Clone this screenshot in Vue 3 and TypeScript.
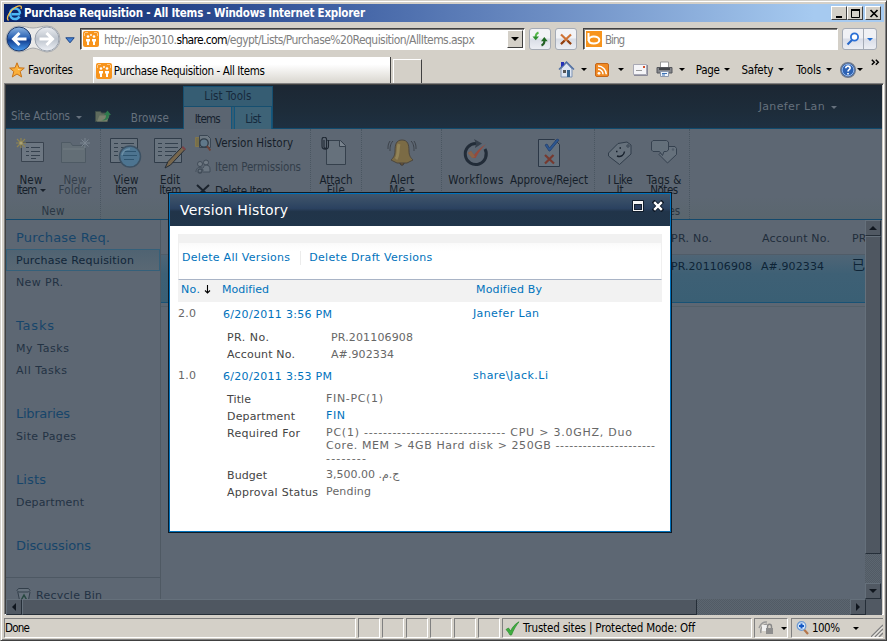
<script setup lang="ts">
interface SideRow {
  label: string
  width: number
  active?: boolean
}
interface SideGroup {
  title: string
  width: number
  rows: SideRow[]
}
interface Field {
  name: string
  nameWidth: number
  lines: { text: string; width: number }[]
  link?: boolean
}

// Spreads a label's letters so that it fills its designed width.
const vFit = {
  mounted(el: HTMLElement, binding: { value: number }) {
    const count = Array.from((el.textContent ?? '').trim()).length
    const natural = el.getBoundingClientRect().width
    if (count > 1) el.style.letterSpacing = `${((binding.value - natural) / (count - 1)).toFixed(3)}px`
  },
}

const sideGroups: SideGroup[] = [
  {
    title: 'Purchase Req.',
    width: 94,
    rows: [
      { label: 'Purchase Requisition', width: 118, active: true },
      { label: 'New PR.', width: 47 },
    ],
  },
  {
    title: 'Tasks',
    width: 38,
    rows: [
      { label: 'My Tasks', width: 53 },
      { label: 'All Tasks', width: 51 },
    ],
  },
  { title: 'Libraries', width: 54, rows: [{ label: 'Site Pages', width: 60 }] },
  { title: 'Lists', width: 30, rows: [{ label: 'Department', width: 68 }] },
  { title: 'Discussions', width: 75, rows: [] },
]

const firstFields: Field[] = [
  { name: 'PR. No.', nameWidth: 42, lines: [{ text: 'PR.201106908', width: 82 }] },
  { name: 'Account No.', nameWidth: 68, lines: [{ text: 'A#.902334', width: 63 }] },
]

const secondFields: Field[] = [
  { name: 'Title', nameWidth: 24, lines: [{ text: 'FIN-PC(1)', width: 57 }] },
  { name: 'Department', nameWidth: 68, lines: [{ text: 'FIN', width: 19 }], link: true },
  {
    name: 'Required For',
    nameWidth: 73,
    lines: [
      { text: 'PC(1) ------------------------------ CPU > 3.0GHZ, Duo', width: 306 },
      { text: 'Core. MEM > 4GB Hard disk > 250GB ----------------------', width: 329 },
      { text: '--------', width: 40 },
    ],
  },
  { name: 'Budget', nameWidth: 40, lines: [{ text: '3,500.00 ج.م.\u200f', width: 72 }] },
  { name: 'Approval Status', nameWidth: 91, lines: [{ text: 'Pending', width: 45 }] },
]
</script>

<template>
  <div class="window">
    <header class="titlebar">
      <svg class="ie" width="17" height="17" viewBox="0 0 17 17">
        <path d="M14.2 9.2H5.6M14 8.8C14 5.6 11.800 3.500 9 3.500S4 5.800 4 8.800s2.200 5.200 5 5.200c2 0 3.600-1 4.500-2.500" fill="none" stroke="#4cb8f5" stroke-width="2.500" />
        <path d="M2.500 15.500C-1 12.500 6 3 12 1.200c3-.900 4 .3 3 2.800" fill="none" stroke="#f5c04a" stroke-width="1.300" />
      </svg>
      <span v-fit="341" class="title-text">Purchase Requisition - All Items - Windows Internet Explorer</span>
      <span class="spacer"></span>
      <div class="winbtns">
        <span class="winbtn"><svg width="14" height="12" viewBox="0 0 14 12"><path d="M3 8h6v2H3z" fill="#000" /></svg></span>
        <span class="winbtn"><svg width="14" height="12" viewBox="0 0 14 12"><path d="M2.500 2v7.500h8V2M2 2h9" fill="none" stroke="#000" /><path d="M2 1h9v2H2z" fill="#000" /></svg></span>
        <span class="winbtn last"><svg width="14" height="12" viewBox="0 0 14 12"><path d="M3.500 2l7 7M10.500 2l-7 7" stroke="#000" stroke-width="1.700" /></svg></span>
      </div>
    </header>

    <div class="navrow">
      <svg class="backfwd" width="58" height="30" viewBox="0 0 58 30">
        <defs>
          <linearGradient id="back" x1="0" y1="0" x2="0" y2="1"><stop offset="0" stop-color="#8db4e0" /><stop offset=".45" stop-color="#2a62b4" /><stop offset=".55" stop-color="#123f91" /><stop offset="1" stop-color="#4a9df0" /></linearGradient>
          <linearGradient id="fwd" x1="0" y1="0" x2="0" y2="1"><stop offset="0" stop-color="#eceef2" /><stop offset=".5" stop-color="#bcc3cc" /><stop offset="1" stop-color="#eef1f6" /></linearGradient>
        </defs>
        <path d="M14 2c6 0 9 2 14 2s9-2 14-2a13 13 0 0 1 0 26c-5 0-9-4-14-4s-8 4-14 4A13 13 0 0 1 14 2z" fill="#e9e9e8" stroke="#a7a9ac" />
        <circle cx="14" cy="15" r="12" fill="url(#back)" stroke="#1e3a6b" />
        <circle cx="42" cy="15" r="12" fill="url(#fwd)" stroke="#9aa2ad" />
        <path d="M14.500 9L8.500 15l6 6M9 15h12.500" fill="none" stroke="#fff" stroke-width="3" />
        <path d="M41.500 9l6 6-6 6M47 15H34.500" fill="none" stroke="#fff" stroke-width="3" />
      </svg>
      <svg class="histcaret" width="10" height="7" viewBox="0 0 10 7"><path d="M.8.8h8.400L5 5.800z" fill="#4583d6" stroke="#1c4384" /></svg>
      <div class="address">
        <svg class="site" width="16" height="16" viewBox="0 0 16 16"><rect width="16" height="16" rx="2" fill="#f7941d" /><path d="M2 1.500h3M11 1.500h3M1.500 2v3M14.500 2v3" stroke="#fbc88a" /><circle cx="5" cy="5.500" r="1.300" fill="#fff" /><circle cx="11" cy="5.500" r="1.300" fill="#fff" /><path d="M3 8h4v2.500H6V14H4v-3.500H3zM9 8h4v2.500h-1V14h-2v-3.500H9zM7.300 3h1.400v2H7.300z" fill="#fff" /></svg>
        <div class="url"><span v-fit="73">http://eip3010.</span><b v-fit="51">share.com</b><span v-fit="248">/egypt/Lists/Purchase%20Requisition/AllItems.aspx</span></div>
        <span class="drop"><i class="caret big"></i></span>
      </div>
      <span class="navbtn refresh">
        <svg width="16" height="16" viewBox="0 0 16 16"><path d="M6.500 1.500C4 2.500 3.500 4 3.500 7" fill="none" stroke="#55b848" stroke-width="2" /><path d="M.5 5.500h6.500L3.700 9.300z" fill="#2f8f2f" /><path d="M9.500 14.500c2.500-1 3-2.500 3-5" fill="none" stroke="#245f24" stroke-width="2" /><path d="M9 10.200h6.700L12.300 6z" fill="#1f6a22" /></svg>
      </span>
      <span class="navbtn stop">
        <svg width="14" height="14" viewBox="0 0 14 14"><path d="M2 2.500l10 9.500M12 2.500L2 12" stroke="#cf7437" stroke-width="2.200" /><path d="M2 12l3.500-3.300M8.500 8.700L12 12" stroke="#8d3f12" stroke-width="2" /></svg>
      </span>
      <div class="search">
        <svg class="site" width="16" height="16" viewBox="0 0 16 16"><rect width="16" height="16" fill="#f7941d" /><path d="M2.500 2v8M2.800 9c0-2 2.200-3.500 5-3.500s5.500 1.400 5.500 3.500-2.500 3.500-5.500 3.500-5-1.500-5-3.500z" fill="none" stroke="#fff" stroke-width="2" /></svg>
        <span v-fit="20">Bing</span>
      </div>
      <div class="searchbtn">
        <span class="lens"><svg width="14" height="14" viewBox="0 0 14 14"><path d="M1.500 12.500l5-5" stroke="#2868c8" stroke-width="2.200" /><circle cx="8.500" cy="5" r="3.600" fill="#fff" stroke="#2a6fd6" stroke-width="1.800" /></svg></span>
        <span class="more"><i class="caret blue"></i></span>
      </div>
    </div>

    <div class="cmdrow">
      <svg class="star" width="16" height="16" viewBox="0 0 16 16"><path d="M8 .8l2 5 5.300.3-4.100 3.400 1.500 5.500L8 12l-4.700 3 1.500-5.500L.7 6.100 6 5.800z" fill="#fbb03b" stroke="#c8741a" /><path d="M8 3l1 4 3.500.3L9 8z" fill="#fde6a8" /></svg>
      <span v-fit="45" class="fav">Favorites</span>
      <div class="tab">
        <svg class="site" width="16" height="16" viewBox="0 0 16 16"><rect width="16" height="16" rx="2" fill="#f7941d" /><path d="M2 1.500h3M11 1.500h3M1.500 2v3M14.500 2v3" stroke="#fbc88a" /><circle cx="5" cy="5.500" r="1.300" fill="#fff" /><circle cx="11" cy="5.500" r="1.300" fill="#fff" /><path d="M3 8h4v2.500H6V14H4v-3.500H3zM9 8h4v2.500h-1V14h-2v-3.500H9zM7.300 3h1.400v2H7.300z" fill="#fff" /></svg>
        <span v-fit="151" class="tabtext">Purchase Requisition - All Items</span>
      </div>
      <div class="newtab"></div>
      <div class="commands">
        <svg width="17" height="17" viewBox="0 0 17 17"><path d="M3 8l5.500-6L14 8v8H3z" fill="#dfe6f2" stroke="#7d93b5" /><path d="M1 8.500l7.500-7.500L16 8.500" fill="none" stroke="#4d6da3" stroke-width="1.400" /><path d="M3 1h3v3L3 6z" fill="#2532b8" /><path d="M9 9h3v7H9z" fill="#35648f" /><path d="M5 9h3v3H5z" fill="#555" /></svg>
        <i class="caret c1"></i>
        <svg class="rss" width="14" height="14" viewBox="0 0 14 14"><rect x=".5" y=".5" width="13" height="13" rx="1.500" fill="#f08a24" stroke="#c4661a" /><circle cx="4" cy="10.300" r="1.400" fill="#fff" /><path d="M3 6.300a5 5 0 0 1 5 5M3 3a8.300 8.300 0 0 1 8.300 8.300" fill="none" stroke="#fff" stroke-width="1.500" /></svg>
        <i class="caret c2"></i>
        <svg class="mail" width="15" height="12" viewBox="0 0 15 12"><path d="M.5.5h13v10H.5z" fill="#f5f5f8" stroke="#a9a9b5" /><path d="M14.500 1v10.500H1" fill="none" stroke="#8a8a98" /><path d="M10 2h2v2h-2z" fill="#d3502c" /><path d="M3 6.500h6" stroke="#999" /></svg>
        <svg class="print" width="17" height="17" viewBox="0 0 17 17"><path d="M4.500 1h8v6h-8z" fill="#fff" stroke="#999" /><path d="M1 6.500h15V12H1z" fill="#85878c" stroke="#55575c" /><path d="M3 7h11v2H3z" fill="#44464a" /><path d="M4.500 10.500h8v5h-8z" fill="#eef4fb" stroke="#8d99ad" /><path d="M6 12.500h5M6 14h3" stroke="#3c73b5" /></svg>
        <i class="caret c3"></i>
        <span v-fit="24" class="cmd">Page</span><i class="caret"></i>
        <span v-fit="32" class="cmd safety">Safety</span><i class="caret"></i>
        <span v-fit="25" class="cmd tools">Tools</span><i class="caret"></i>
        <svg class="help" width="16" height="16" viewBox="0 0 16 16"><circle cx="8" cy="8" r="7.300" fill="#2d62b3" stroke="#6f7a8c" stroke-width="1.400" /><circle cx="8" cy="8" r="5.800" fill="none" stroke="#8fb4ea" /><path d="M5.800 6.300c0-3 4.600-2.600 4.300-.1C10 7.800 8 7.600 8 9.600M8 11v1.600" fill="none" stroke="#fff" stroke-width="1.700" /></svg>
        <i class="caret c4"></i>
        <svg class="chev" width="9" height="7" viewBox="0 0 9 7"><path d="M.8.700L3.300 3.200.8 5.700M4.800.700l2.500 2.500-2.500 2.500" fill="none" stroke="#000" stroke-width="1.500" /></svg>
      </div>
    </div>

    <div class="frame">
      <div class="sp-top">
        <span v-fit="59" class="siteactions">Site Actions</span><i class="caret dim"></i>
        <svg class="upfolder" width="16" height="14" viewBox="0 0 16 14"><path d="M.5 2.500h5l1 1.500h6v8.500H.5z" fill="#5f6b5d" stroke="#3f4d48" /><path d="M2 12.500l2.500-6h10L12 12.500z" fill="#78806c" /><path d="M6 11c4 0 5-2 5-5H9l3.500-4.500L16 6h-2c0 4-3 6.500-8 5z" fill="#2f7a4d" /></svg>
        <span v-fit="38" class="browse">Browse</span>
        <div class="tooltabs">
          <div class="tt-title"><span v-fit="47">List Tools</span></div>
          <div class="tt-row">
            <span class="tt on"><span v-fit="26">Items</span></span>
            <span class="tt"><span v-fit="16">List</span></span>
          </div>
        </div>
        <span class="spacer"></span>
        <div class="user"><span v-fit="66">Janefer Lan</span><i class="caret dim"></i></div>
      </div>

      <div class="ribbon">
        <div class="rgroup g1">
          <div class="rbody">
            <div class="rbtn">
              <svg width="32" height="32" viewBox="0 0 32 32"><path d="M6.500 5.500h22v19h-22z" fill="#6d7782" stroke="#39434f" /><path d="M11 10.500h3M11 14.500h3M11 18.500h3M16 10.500h9M16 14.500h9M16 18.500h9M16 21.500h5" stroke="#35414e" /><path d="M6 1v10M1 6h10M2 2l8 8M10 2l-8 8" stroke="#8f8450" stroke-width="1.200" /><circle cx="6" cy="6" r="1.600" fill="#aaa273" /></svg>
              <span v-fit="23">New</span><span class="ln2"><span v-fit="21">Item</span><i class="caret tiny"></i></span>
            </div>
            <div class="rbtn off">
              <svg width="32" height="32" viewBox="0 0 32 32"><path d="M2.500 25.500v-20h9l2 3h13v17z" fill="#636e76" stroke="#4e5a64" /><path d="M4 12h21" stroke="#727c82" /><path d="M26 1v10M21 6h10M22.500 2.500l7 7M29.500 2.500l-7 7" stroke="#7b8691" /></svg>
              <span v-fit="23">New</span><span v-fit="33" class="ln2">Folder</span>
            </div>
          </div>
          <div class="rlabel"><span v-fit="23">New</span></div>
        </div>
        <div class="rgroup g2">
          <div class="rbody">
            <div class="rbtn">
              <svg width="32" height="32" viewBox="0 0 32 32"><path d="M.5 1.500h27v24H.5z" fill="#68737e" stroke="#303c49" /><path d="M4 6.500h4M4 10.500h4M4 14.500h4M4 18.500h4M11 6.500h13M11 10.500h13" stroke="#33404d" /><circle cx="20" cy="19.500" r="10.500" fill="#4d7490" stroke="#3c5163" stroke-width="1.500" /><path d="M14 14.500h12M13 18.500h14M14 22.500h10" stroke="#2e546f" /><path d="M12 18a8 8 0 0 1 8-6" fill="none" stroke="#6d90a6" stroke-width="1.500" /></svg>
              <span v-fit="25">View</span><span v-fit="22" class="ln2">Item</span>
            </div>
            <div class="rbtn">
              <svg width="32" height="32" viewBox="0 0 32 32"><path d="M.5 1.500h27v24H.5z" fill="#68737e" stroke="#303c49" /><path d="M4 6.500h4M4 10.500h4M4 14.500h4M4 18.500h4M11 6.500h13M11 10.500h13M11 14.500h11M11 18.500h7" stroke="#33404d" /><path d="M11 31l3-6.500L28 10l3 2.500L16.500 28z" fill="#77664c" stroke="#252d36" /><path d="M27.500 10.500l1.500-1.500 3 3-1.500 1.500z" fill="#7b4247" /></svg>
              <span v-fit="20">Edit</span><span v-fit="22" class="ln2">Item</span>
            </div>
            <div class="rsmall">
              <div class="rs">
                <svg width="16" height="16" viewBox="0 0 16 16"><path d="M.5 2.500h4v9h-4z" fill="#776f4a" stroke="#82764c" /><path d="M4.500.5h8l3 3v9h-11z" fill="#6d7882" stroke="#3a4653" /><circle cx="9" cy="8" r="4.200" fill="#60788a" stroke="#2f3b47" stroke-width="1.300" /><path d="M12 11l3.500 4.500" stroke="#6c4238" stroke-width="2" /></svg>
                <span v-fit="78">Version History</span>
              </div>
              <div class="rs off">
                <svg width="16" height="16" viewBox="0 0 16 16"><circle cx="5" cy="5" r="2.500" fill="#707a84" stroke="#414c58" /><circle cx="11" cy="3.500" r="2.500" fill="#707a84" stroke="#414c58" /><path d="M1 13c0-6 7-6 7-1M8 9c1-4 7-4 7 1v3H8" fill="#6a7580" stroke="#414c58" /><circle cx="5" cy="12" r="2" fill="none" stroke="#414c58" stroke-width="1.300" /></svg>
                <span v-fit="86">Item Permissions</span>
              </div>
              <div class="rs">
                <svg width="16" height="16" viewBox="0 0 16 16"><path d="M2 2l12 11M14 2L2 13" stroke="#1a222c" stroke-width="2" /></svg>
                <span v-fit="57">Delete Item</span>
              </div>
            </div>
          </div>
          <div class="rlabel"></div>
        </div>
        <div class="rgroup g3">
          <div class="rbody">
            <div class="rbtn">
              <svg width="32" height="32" viewBox="0 0 32 32"><path d="M6.500 3.500h14l5 5v19h-19z" fill="#66717c" stroke="#35404c" /><path d="M19.500 3.500v6h6" fill="#7a848e" stroke="#35404c" /><path d="M4 3v7a1.300 1.300 0 0 0 2.600 0V2.500a2.200 2.200 0 0 0-4.600 0V9a3.200 3.200 0 0 0 6.500 0V3" fill="none" stroke="#1f2833" stroke-width="1.100" /></svg>
              <span v-fit="33">Attach</span><span v-fit="18" class="ln2">File</span>
            </div>
          </div>
          <div class="rlabel"></div>
        </div>
        <div class="rgroup g4">
          <div class="rbody">
            <div class="rbtn">
              <svg width="32" height="32" viewBox="0 0 32 32"><path d="M16 3c-6 0-7 5-7 11 0 5-2 7-4 9l6 3h10l6-3c-2-2-4-4-4-9 0-6-1-11-7-11z" fill="#7b6b45" stroke="#4c473f" /><path d="M13 7c-1.500 5 0 11-3 15" fill="none" stroke="#938458" stroke-width="3" /><path d="M14 26c0 3 4 3 4 0" fill="#5f4e37" stroke="#403d3a" /><path d="M7 4c-3 3-3 7-3 10M4 4c-2 3-2 5-2 8M25 4c3 3 3 7 3 10M28 4c2 3 2 5 2 8" fill="none" stroke="#3c424a" /></svg>
              <span v-fit="24">Alert</span><span class="ln2"><span v-fit="16">Me</span><i class="caret tiny"></i></span>
            </div>
          </div>
          <div class="rlabel"></div>
        </div>
        <div class="rgroup g5">
          <div class="rbody">
            <div class="rbtn w68">
              <svg width="32" height="32" viewBox="0 0 32 32"><path d="M16 6.500A10.500 10.500 0 1 0 25 12" fill="none" stroke="#222c38" stroke-width="3" /><path d="M14 2l8 4.500-7 4.500 1-4.500z" fill="#353f4b" /><path d="M8 16l3-2 3 4c3-4 6-7 12-11-4 4-7 8-10.500 14h-3z" fill="#954a3c" /><path d="M8 16l3-2 3 4 1 2-3 1z" fill="#896348" /></svg>
              <span v-fit="55">Workflows</span>
            </div>
            <div class="rbtn w78">
              <svg width="32" height="32" viewBox="0 0 32 32"><path d="M5.500 2.500h16l5 5v22h-21z" fill="#65717d" stroke="#2b3746" /><path d="M12 8l2-1 2.500 4L24 2l2 1-9 11h-1z" fill="#2c5792" stroke="#294673" /><path d="M12 18l9 8.500M20.500 18L12 26.500" stroke="#76392f" stroke-width="2.200" /></svg>
              <span v-fit="78">Approve/Reject</span>
            </div>
          </div>
          <div class="rlabel"></div>
        </div>
        <div class="rgroup g6">
          <div class="rbody">
            <div class="rbtn w50">
              <svg width="32" height="32" viewBox="0 0 32 32"><path d="M14 6.500l9-1.500 4 3v9L15.500 27.500 4.500 19v-3z" fill="#66717c" stroke="#303c4a" stroke-linejoin="round" /><circle cx="24" cy="9" r="1.300" fill="#586470" stroke="#303c4a" stroke-width=".7" /><path d="M12 14.500h1.500M15.500 11h1.500M13 19c4 1.500 7-1 7.500-4.500" fill="none" stroke="#17202c" stroke-width="1.400" /></svg>
              <span v-fit="25">I Like</span><span v-fit="7" class="ln2">It</span>
            </div>
            <div class="rbtn w38">
              <svg width="32" height="32" viewBox="0 0 32 32"><path d="M27 9.500h-8l-8 8L19.500 26l9-8.500v-6z" fill="#66717c" stroke="#35414f" /><circle cx="25" cy="12.500" r="1.200" fill="#4f5b68" /><path d="M5 3.500h13.500l2 1.500v8l-2 1.500H16l-1.500 4-3-4H5L3.500 13V5z" fill="#64707b" stroke="#35414f" /></svg>
              <span v-fit="35">Tags &amp;</span><span v-fit="28" class="ln2">Notes</span>
            </div>
          </div>
          <div class="rlabel"><span v-fit="76">Tags and Notes</span></div>
        </div>
      </div>

      <div class="workspace">
        <div class="content">
          <nav class="side">
            <section v-for="g in sideGroups" :key="g.title" class="sgroup">
              <h3><span v-fit="g.width">{{ g.title }}</span></h3>
              <div v-for="r in g.rows" :key="r.label" class="srow" :class="{ active: r.active }"><span v-fit="r.width">{{ r.label }}</span></div>
            </section>
            <div class="recycle">
              <svg width="16" height="16" viewBox="0 0 16 16"><path d="M2.500 1.500h10l1.500 2-1.500 1.500h-10L1 3.500zM1.800 5L4 15.500h8L14 5" fill="#67727d" stroke="#323e4a" /><path d="M5 13.500L8 8l3 5.500z" fill="none" stroke="#274740" stroke-width="1.500" /></svg>
              <span v-fit="66">Recycle Bin</span>
            </div>
          </nav>
          <main class="list">
            <div class="lhead"><span class="k1"><span v-fit="41">PR. No.</span></span><span class="k2"><span v-fit="68">Account No.</span></span><span class="k3">PR</span></div>
            <div class="lrow"><span class="k1"><span v-fit="81">PR.201106908</span></span><span class="k2"><span v-fit="63">A#.902334</span></span><span class="k3 cjk">已批</span></div>
            <div class="lend"></div>
          </main>
        </div>
        <div class="vscroll">
          <span class="sb"><i class="ar up"></i></span>
          <span class="thumb v"></span>
          <span class="track"></span>
          <span class="sb"><i class="ar down"></i></span>
        </div>
      </div>
      <div class="hscroll">
        <span class="sb"><i class="ar left"></i></span>
        <span class="thumb h"></span>
        <span class="track"></span>
        <span class="sb"><i class="ar right"></i></span>
        <span class="corner"></span>
      </div>
    </div>

    <footer class="status">
      <span class="cell done"><span v-fit="25">Done</span></span>
      <span v-for="n in 6" :key="n" class="cell small"></span>
      <span class="cell zone">
        <svg width="15" height="15" viewBox="0 0 15 15"><path d="M1 8.500l2.500-1.500 2 3C7.500 6 10 3 14 .8 11 4.500 8.500 9 6.500 14H5C4 12 2.500 10 1 8.500z" fill="#3fae3f" stroke="#2b8a2e" stroke-width=".7" /></svg>
        <span v-fit="172">Trusted sites | Protected Mode: Off</span>
      </span>
      <span class="cell lock">
        <svg width="16" height="14" viewBox="0 0 16 14"><path d="M1 7C3 2 6 .5 9 1M3 12c-1-4 1-8 6-9" fill="none" stroke="#999" stroke-width="1.500" /><path d="M4 4h5v6H4z" fill="#f1f1f1" /><path d="M9.500 7V5.500c0-3 4-3 4 0V7" fill="none" stroke="#888" stroke-width="1.400" /><path d="M8 7h7v6H8z" fill="#8e8e8e" /></svg>
        <i class="caret"></i>
      </span>
      <span class="cell zoom">
        <svg width="13" height="14" viewBox="0 0 13 14"><path d="M8 8.500l4 4.500" stroke="#b5764a" stroke-width="2.200" /><circle cx="5.500" cy="5" r="4.300" fill="#cfe3fa" stroke="#6f9bd1" stroke-width="1.200" /><path d="M5.500 2.500v5M3 5h5" stroke="#1559c4" stroke-width="2" /></svg>
        <span v-fit="28">100%</span>
        <i class="caret"></i>
      </span>
      <svg class="grip" width="12" height="13" viewBox="0 0 12 13"><path d="M0 13L12 1M4 13l8-8M8 13l4-4" stroke="#808080" stroke-width="1.400" /><path d="M1.500 13L12 2.500M5.500 13L12 6.500" stroke="#fff" stroke-width=".8" /></svg>
    </footer>

    <div class="dialog">
      <div class="dhead">
        <span v-fit="108">Version History</span>
        <svg class="dmax" width="12" height="12" viewBox="0 0 12 12"><rect width="12" height="12" rx="1" fill="#101c2b" /><path d="M1 1h10v10H1z" fill="#f4f4f4" /><path d="M2 4h8v6H2z" fill="#14202f" /><path d="M3 5h6v4H3z" fill="#2a3c5c" /></svg>
        <svg class="dclose" width="12" height="12" viewBox="0 0 12 12"><path d="M2.500 2.500l7 7M9.500 2.500l-7 7" stroke="#0d1725" stroke-width="4" stroke-linecap="square" /><path d="M2.200 2.200l7.600 7.600M9.800 2.200l-7.600 7.600" stroke="#fff" stroke-width="2.400" /></svg>
      </div>
      <div class="dbody">
        <div class="dtools"><a v-fit="108">Delete All Versions</a><i class="dsep"></i><a v-fit="123">Delete Draft Versions</a></div>
        <div class="dcols">
          <span class="dno"><a v-fit="19">No.</a><svg width="7" height="9" viewBox="0 0 7 9"><path d="M3.500 0v8M1 5.500l2.500 2.500L6 5.500" fill="none" stroke="#000" stroke-width="1.100" /></svg></span>
          <span class="dmod"><a v-fit="47">Modified</a></span>
          <span><a v-fit="66">Modified By</a></span>
        </div>
        <div class="ver">
          <span class="num"><span v-fit="18">2.0</span></span>
          <span class="date"><a v-fit="109">6/20/2011 3:56 PM</a></span>
          <span><a v-fit="66">Janefer Lan</a></span>
        </div>
        <div class="fields first">
          <div v-for="f in firstFields" :key="f.name" class="field">
            <span class="fname"><span v-fit="f.nameWidth">{{ f.name }}</span></span>
            <div class="fval"><div v-for="l in f.lines" :key="l.text"><span v-fit="l.width">{{ l.text }}</span></div></div>
          </div>
        </div>
        <div class="ver second">
          <span class="num"><span v-fit="18">1.0</span></span>
          <span class="date"><a v-fit="109">6/20/2011 3:53 PM</a></span>
          <span><a v-fit="75">share\Jack.Li</a></span>
        </div>
        <div class="fields rest">
          <div v-for="f in secondFields" :key="f.name" class="field">
            <span class="fname"><span v-fit="f.nameWidth">{{ f.name }}</span></span>
            <div class="fval" :class="{ link: f.link }"><div v-for="l in f.lines" :key="l.text"><span v-fit="l.width">{{ l.text }}</span></div></div>
          </div>
        </div>
      </div>
    </div>
  </div>
</template>

<style>
body {
  overflow: hidden;
  background: #d4d0c8;
}
</style>

<style scoped>
.window, .window * { box-sizing: border-box; }
.window {
  position: relative;
  width: 887px;
  height: 641px;
  display: flex;
  flex-direction: column;
  padding: 2px;
  background: #d4d0c8;
  border: 1px solid #d4d0c8;
  border-right-color: #404040;
  border-bottom-color: #404040;
  box-shadow: inset 1px 1px #fff, inset -1px -1px #808080;
  font: 11.5px "DejaVu Sans Condensed", "DejaVu Sans", sans-serif;
  font-stretch: condensed;
  color: #000;
  white-space: nowrap;
}
svg { flex: none; display: block; }
span { flex: none; }
.spacer { flex: 1; }
.caret {
  flex: none;
  width: 0;
  height: 0;
  border: 3px solid transparent;
  border-top-color: #000;
  border-bottom: 0;
}
.caret.big { border-width: 4px 4px 0; }
.caret.blue { border-top-color: #1f6bd0; }
.caret.dim { border-top-color: #66717d; }
.caret.tiny { border-top-color: #1a222c; margin: 4px 0 0 3px; }

.titlebar {
  display: flex;
  align-items: center;
  flex: none;
  width: 880px;
  height: 18px;
  margin: 1px 0 0 1px;
  padding: 0 3px 0 2px;
  color: #fff;
  font-weight: bold;
  background: linear-gradient(90deg, #0a246a 0%, #3a5b9f 34%, #6d8ec4 62%, #a6caf0 92%);
}
.title-text { margin-left: 1px; }
.winbtns { display: flex; }
.winbtn {
  width: 16px;
  height: 14px;
  padding: 1px;
  background: #d4d0c8;
  border: 1px solid #fff;
  border-color: #fff #404040 #404040 #fff;
  overflow: hidden;
}
.winbtn.last { margin-left: 2px; }

.navrow { display: flex; flex: none; height: 35px; padding-left: 2px; }
.backfwd { margin: 2px 0 0 0; }
.histcaret { margin: 15px 0 0 2px; }
.address {
  display: flex;
  align-items: center;
  width: 445px;
  height: 22px;
  margin: 6px 0 0 5px;
  padding: 0 1px;
  background: #fff;
  border: 1px solid;
  border-color: #404040 #fff #fff #404040;
  box-shadow: inset 1px 1px #808080;
}
.url { display: flex; flex: 1; margin: 1px 0 0 5px; font-size: 12px; color: #808080; }
.url b { font-weight: normal; color: #000; flex: none; }
.drop {
  display: flex;
  align-items: center;
  justify-content: center;
  width: 16px;
  height: 18px;
  background: #d4d0c8;
  border: 1px solid;
  border-color: #fff #404040 #404040 #fff;
}
.address .site { margin-left: 1px; }
.navbtn {
  display: flex;
  align-items: center;
  justify-content: center;
  width: 22px;
  height: 22px;
  margin: 6px 0 0 4px;
  border: 1px solid #a5abb5;
  border-radius: 3px;
  background: linear-gradient(#f2f3f6 45%, #d9dde6 50%, #eceef3);
}
.search {
  display: flex;
  align-items: center;
  width: 255px;
  height: 22px;
  margin: 6px 0 0 6px;
  padding-left: 2px;
  gap: 3px;
  color: #808080;
  background: #fff;
  border: 1px solid;
  border-color: #404040 #fff #fff #404040;
  box-shadow: inset 1px 1px #808080;
}
.search span { margin-top: 1px; }
.searchbtn {
  display: flex;
  width: 35px;
  height: 22px;
  margin: 6px 0 0 4px;
  border: 1px solid #a5abb5;
  border-radius: 3px;
  background: linear-gradient(#f0f1f5 45%, #d9dde8 50%, #eceef3);
}
.lens { width: 21px; padding: 3px; border-right: 1px solid #a5abb5; }
.more { display: flex; flex: 1; align-items: center; justify-content: center; }

.cmdrow { display: flex; flex: none; height: 26px; padding-left: 6px; }
.star { margin-top: 5px; }
.fav { margin: 6px 0 0 3px; }
.tab {
  display: flex;
  align-items: center;
  width: 297px;
  height: 26px;
  margin: 0 0 0 20px;
  padding-left: 2px;
  gap: 2px;
  background: linear-gradient(#fff 25%, #d9d6cf);
  border: 1px solid #fff;
  border-width: 1px 0 0 1px;
  box-shadow: 1px 0 #404040;
}
.tab .site { margin-top: 1px; }
.tabtext { margin-top: 1px; }
.newtab {
  width: 29px;
  height: 24px;
  margin: 2px 0 0 3px;
  border: 1px solid #fff;
  border-right: 1px solid #404040;
  border-bottom: 0;
}
.commands { display: flex; align-items: center; height: 25px; margin-left: 136px; }
.commands .c1 { margin-left: 6px; }
.rss { margin-left: 8px; }
.commands .c2 { margin-left: 9px; }
.mail { margin-left: 9px; }
.print { margin-left: 8px; }
.commands .c3 { margin: 0 11px 0 6px; }
.cmd { margin-right: 5px; }
.safety { margin-left: 11px; }
.tools { margin-left: 12px; }
.help { margin-left: 8px; }
.commands .c4 { margin-left: 1px; }
.chev { margin: -14px 0 0 8px; }

.frame {
  display: flex;
  flex-direction: column;
  flex: none;
  width: 880px;
  height: 532px;
  margin-left: 1px;
  border: 1px solid;
  border-color: #808080 #fff #fff #808080;
  background: #5d6773;
  box-shadow: inset 1px 1px #404040, inset -1px -1px #d4d0c8;
  padding: 1px;
}
.sp-top {
  display: flex;
  flex: none;
  height: 44px;
  color: #66717d;
  background: linear-gradient(#1c2733, #1d2c3a 60%, #1e3041);
  border-bottom: 1px solid #104a6d;
}
.siteactions { margin: 24px 0 0 5px; }
.sp-top > .caret.dim { margin: 31px 0 0 6px; }
.upfolder { margin: 24px 0 0 13px; }
.browse { margin: 26px 0 0 20px; }
.tooltabs { display: flex; flex-direction: column; width: 90px; height: 44px; margin: 1px 0 0 14px; border: 1px solid #164f70; border-bottom: 0; background: #365d73; color: #17293b; flex: none; }
.tt-title { display: flex; justify-content: center; height: 20px; padding-top: 2px; border-bottom: 1px solid #164f70; }
.tt-row { display: flex; gap: 2px; flex: 1; }
.tt { display: flex; justify-content: center; flex: none; width: 38px; padding-top: 5px; background: #3e6377; border: 1px solid #13577e; border-bottom: 0; border-top: 0; height: 22px; color: #14293d; }
.tt.on { width: 48px; height: 23px; background: #5b6571; border-left: 0; color: #16212e; }
.user { display: flex; gap: 6px; margin: 15px 45px 0 0; font-family: "DejaVu Sans", sans-serif; font-size: 11px; font-stretch: normal; }
.user .caret { margin-top: 6px; }

.ribbon { display: flex; flex: none; height: 91px; background: linear-gradient(#5d6773 75%, #5a666e); border-bottom: 1px solid #14496c; color: #151e29; }
.rgroup { display: flex; flex-direction: column; flex: none; border-right: 1px dotted #4a5661; }
.rbody { display: flex; flex: none; height: 71px; }
.rbtn { display: flex; flex-direction: column; align-items: center; width: 44px; padding-top: 8px; line-height: 10px; }
.rbtn svg { margin-bottom: 6px; }
.rbtn .ln2 { display: flex; }
.off { color: #333e4a; }
.w68 { width: 68px; }
.w78 { width: 78px; }
.w50 { width: 50px; }
.w38 { width: 38px; }
.g1 { width: 95px; }
.g1 .rbody, .g2 .rbody { padding-left: 3px; }
.g2 { width: 210px; }
.g3 { width: 51px; }
.g3 .rbody { padding-left: 3px; }
.g4 { width: 80px; }
.g4 .rbody { padding-left: 18px; }
.g5 { width: 153px; }
.g6 { width: 95px; }
.rlabel { display: flex; justify-content: center; height: 19px; padding-top: 5px; line-height: 13px; color: #2a3743; }
.rsmall { display: flex; flex-direction: column; padding: 2px 0 0 3px; }
.rs { display: flex; align-items: center; flex: none; gap: 4px; height: 24px; }

.workspace { display: flex; flex: none; height: 379px; font-family: "DejaVu Sans", sans-serif; font-size: 11px; font-stretch: normal; }
.content { display: flex; width: 859px; height: 379px; overflow: hidden; }
.side { display: flex; flex-direction: column; flex: none; width: 155px; height: 379px; padding-top: 7px; border-right: 1px solid #4f5963; color: #233243; overflow: hidden; }
.sgroup { margin-bottom: 22px; flex: none; }
.side h3 { margin: 0; height: 22px; line-height: 22px; padding-left: 10px; font-size: 13px; font-weight: normal; color: #17456a; }
.srow { height: 22px; line-height: 23px; padding-left: 10px; }
.srow.active { padding-left: 9px; line-height: 21px; color: #112538; border: 1px solid #35607a; background: linear-gradient(#4f6372, #596874); }
.srow span, .side h3 span, .dbody span > span { display: inline-block; }
.recycle { display: flex; gap: 4px; flex: none; height: 40px; margin-top: -2px; padding: 9px 0 0 10px; border-top: 1px solid #4d5863; }
.recycle span { margin-top: 2px; }
.list { flex: 1; min-width: 0; color: #1f2d3b; }
.lhead { display: flex; height: 35px; padding: 12px 0 0 510px; border-bottom: 1px solid #505c68; }
.k1, .k2 { width: 91px; }
.lhead .k2 { width: 90px; }
.lrow .k1 { width: 90px; }
.lrow { display: flex; height: 48px; padding: 5px 0 0 510px; color: #0e2436; background: linear-gradient(#4f6576, #3e6075 40%, #3a5f74); border-bottom: 1px solid #185275; }
.cjk { font-family: "DejaVu Sans", "Noto Sans CJK SC", sans-serif; font-size: 13px; line-height: 13px; margin-top: -2px; }
.lend { height: 4px; border-bottom: 1px solid #536069; }

.vscroll { display: flex; flex-direction: column; width: 16px; height: 379px; }
.hscroll { display: flex; height: 16px; }
.sb { display: flex; align-items: center; justify-content: center; flex: none; width: 16px; height: 16px; background: #515963; border: 1px solid; border-color: #65707b #252e38 #252e38 #65707b; }
.thumb { flex: none; background: #4f5761; border: 1px solid; border-color: #65707b #252e38 #252e38 #65707b; }
.thumb.v { height: 318px; }
.thumb.h { width: 675px; }
.track { flex: 1; background: repeating-conic-gradient(#5c6670 0 25%, #525b65 0 50%) 0 0 / 2px 2px; }
.corner { width: 16px; background: #515963; }
.ar { width: 0; height: 0; border: 4px solid transparent; }
.ar.up { border-top: 0; border-bottom-color: #10161e; }
.ar.down { border-bottom: 0; border-top-color: #10161e; }
.ar.left { border-left: 0; border-right-color: #10161e; }
.ar.right { border-right: 0; border-left-color: #10161e; }

.status { display: flex; flex: none; gap: 2px; height: 20px; margin: 3px 0 0 1px; }
.cell { display: flex; align-items: center; border: 1px solid; border-color: #808080 #fff #fff #808080; }
.done { width: 352px; }
.small { width: 22px; }
.zone { width: 250px; gap: 3px; padding-left: 2px; }
.lock { width: 34px; gap: 7px; padding-left: 3px; }
.zoom { width: 92px; padding-left: 4px; border-right: 0; margin-left: 1px; }
.zoom span { margin: 0 14px 0 3px; }
.grip { margin: 6px 0 0 -14px; }

.dialog {
  position: absolute;
  left: 167px;
  top: 191px;
  width: 504px;
  height: 341px;
  padding: 1px;
  background: #0072bc;
  border: 1px solid #0d1a26;
  font-family: "DejaVu Sans", sans-serif;
  font-size: 11px;
  font-stretch: normal;
}
.dhead { display: flex; height: 32px; padding: 7px 6px 0 10px; font-size: 14px; color: #fff; background: linear-gradient(#41566b, #2b4260 45%, #213449 55%, #20354a); }
.dhead span { margin-right: auto; line-height: 18px; }
.dmax { margin: -1px 8px 0 0; }
.dclose { margin-top: -1px; }
.dbody { height: 305px; padding: 8px 8px 0; background: #fff; color: #676767; }
.dbody a { display: inline-block; color: #0072bc; }
.dtools { display: flex; height: 46px; padding: 17px 0 0 3px; background: linear-gradient(#f1f1f1 9px, #fafafa 9px, #fff 17px); border: 1px solid #f0f0f0; border-width: 0 1px; border-bottom: 1px solid #a9b4c6; }
.dsep { width: 1px; height: 14px; margin: 0 8px 0 10px; background: #ececec; }
.dcols { display: flex; height: 22px; padding: 3px 0 0 3px; background: #f2f2f2; }
.dno { display: flex; gap: 4px; width: 41px; }
.dno svg { margin-top: 2px; }
.dmod { width: 254px; }
.ver { display: flex; height: 29px; padding-top: 5px; }
.num { width: 45px; }
.date { width: 250px; padding-top: 1px; }
.ver.second { height: 26px; padding-top: 4px; }
.fields { padding-left: 49px; line-height: 13px; }
.field { display: flex; padding-bottom: 4px; }
.fname { width: 99px; color: #444; }
.first .fname { width: 104px; }
.rest { margin-top: 2px; }
.rest .fval { margin-top: -1px; }
.fval.link { color: #0072bc; }
.fval div { height: 13px; }
</style>
